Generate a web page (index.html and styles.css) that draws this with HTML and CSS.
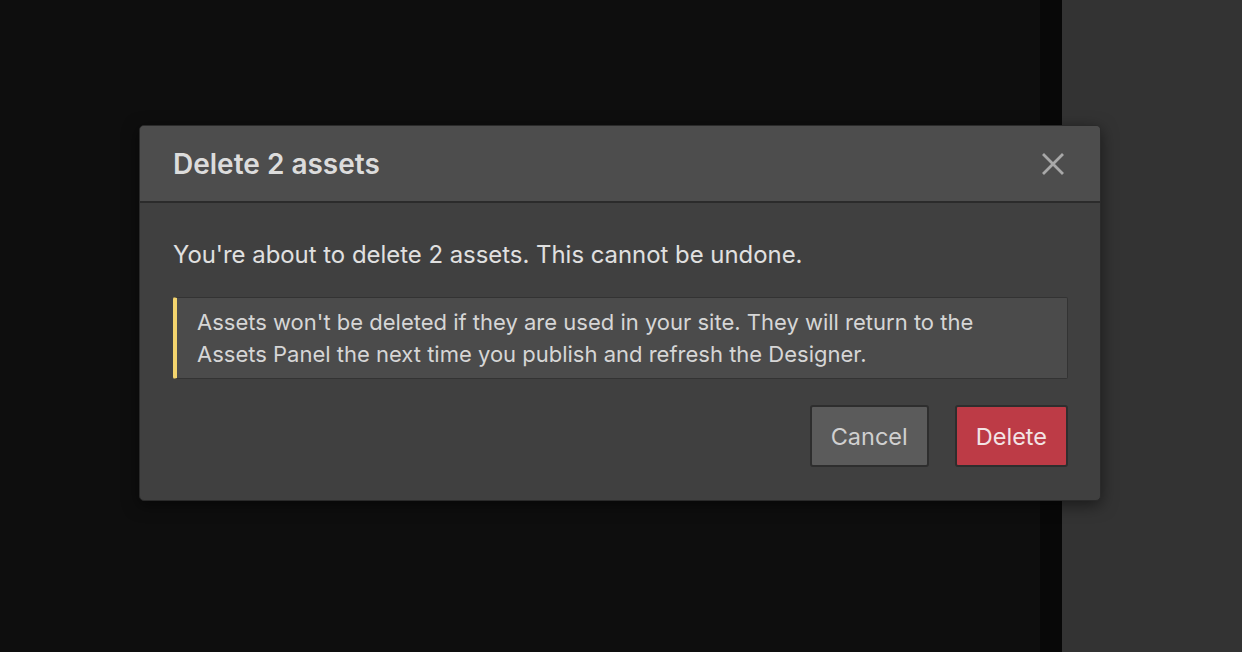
FILE: index.html
```html
<html>
	<head>
		<link rel="stylesheet" href="styles.css">
	</head>
	<body>
		<div class="app">
			<div class="canvas">
				<div class="dialog">
					<div class="dialog-header">
						<h2 class="dialog-title">Delete 2 assets</h2>
						<button class="close" aria-label="Close">
							<svg width="22" height="22" viewBox="0 0 22 22">
								<path d="M2 2L20 20M20 2L2 20" stroke="#a8a8a8" stroke-width="2.8" stroke-linecap="square" fill="none"/>
							</svg>
						</button>
					</div>
					<div class="dialog-body">
						<p class="message">You're about to delete 2 assets. This cannot be undone.</p>
						<div class="notice">
							Assets won't be deleted if they are used in your site. They will return to the
							Assets Panel the next time you publish and refresh the Designer.
						</div>
						<div class="actions">
							<button class="btn btn-cancel">Cancel</button>
							<button class="btn btn-delete">Delete</button>
						</div>
					</div>
				</div>
			</div>
			<div class="divider"></div>
			<div class="sidebar"></div>
		</div>
	</body>
</html>
```

FILE: styles.css
```css
html, body {
	height: 100%;
	width: 100%;
	margin: 0;
	padding: 0;
	font-family: Inter, "Noto Sans", sans-serif;
	color: #dedede;
}
.app {
	display: flex;
	height: 100%;
	background-color: #0e0e0e;
}
.canvas {
	position: relative;
	width: 1040px;
	height: 100%;
}
.divider {
	width: 22px;
	background-color: #080808;
}
.sidebar {
	flex: 1;
	background-color: #333333;
}
.dialog {
	position: absolute;
	top: 125px;
	left: 139px;
	width: 960px;
	background-color: #404040;
	border: 1px solid #2a2a2a;
	border-radius: 5px;
	box-shadow: 0 4px 16px rgba(0, 0, 0, 0.5);
	overflow: hidden;
	z-index: 1;
}
.dialog-header {
	display: flex;
	align-items: center;
	justify-content: space-between;
	height: 75px;
	padding: 0 36px 0 33px;
	background-color: #4d4d4d;
	border-bottom: 2px solid #2b2b2b;
}
.dialog-title {
	margin: 0;
	font-size: 28px;
	font-weight: 600;
	color: #dcdcdc;
}
.close {
	background: none;
	border: none;
	padding: 0;
	width: 22px;
	height: 22px;
	cursor: pointer;
}
.dialog-body {
	padding: 36px 32px 33px 33px;
}
.message {
	margin: 0 0 26px 0;
	font-size: 23.9px;
	line-height: 32px;
	color: #e0e0e0;
}
.notice {
	background-color: #4b4b4b;
	border: 1px solid #333333;
	border-left: 4px solid #f3d46e;
	border-radius: 2px;
	padding: 8px 20px 8px 20px;
	font-size: 22px;
	line-height: 32px;
	color: #d6d6d6;
}
.actions {
	display: flex;
	justify-content: flex-end;
	gap: 26px;
	margin-top: 26px;
}
.btn {
	height: 62px;
	padding: 0 19px;
	font-family: Inter, "Noto Sans", sans-serif;
	font-size: 23.5px;
	border: 2px solid #2e2e2e;
	border-radius: 3px;
	cursor: pointer;
}
.btn-cancel {
	background-color: #5b5b5b;
	color: #d0d0d0;
}
.btn-delete {
	background-color: #bd3b46;
	color: #f2e4e5;
}
```
